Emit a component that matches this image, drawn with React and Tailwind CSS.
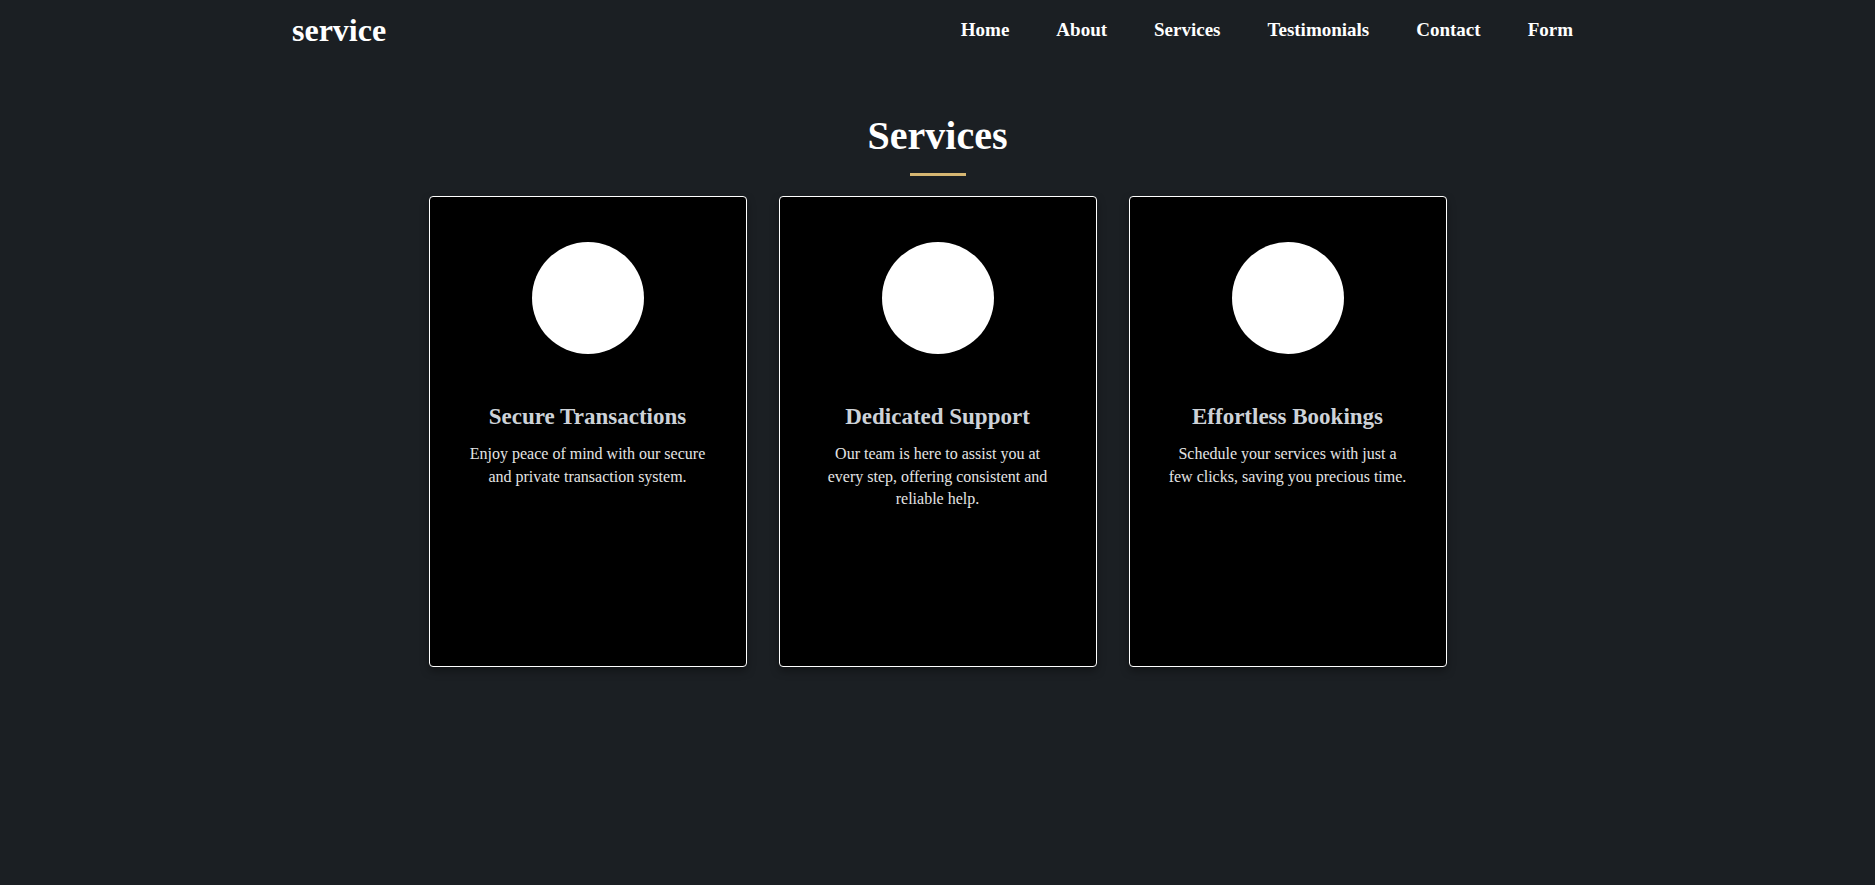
import React from "react";

const serif = { fontFamily: '"Liberation Serif", "Times New Roman", serif' };

const services = [
  {
    title: "Secure Transactions",
    text: "Enjoy peace of mind with our secure and private transaction system.",
  },
  {
    title: "Dedicated Support",
    text: "Our team is here to assist you at every step, offering consistent and reliable help.",
  },
  {
    title: "Effortless Bookings",
    text: "Schedule your services with just a few clicks, saving you precious time.",
  },
];

const links = ["Home", "About", "Services", "Testimonials", "Contact", "Form"];

export default function App() {
  return (
    <div className="min-h-screen w-full bg-[#1b1f23] text-white" style={serif}>
      <header className="mx-auto flex h-[60px] w-[1291px] items-center justify-between pr-[10px]">
        <a className="text-[32px] font-bold leading-none text-white">service</a>
        <nav className="mt-[1px]">
          <ul className="flex items-center gap-[47px]">
            {links.map((l) => (
              <li key={l}>
                <a className="text-[19px] font-bold leading-none text-white">{l}</a>
              </li>
            ))}
          </ul>
        </nav>
      </header>

      <section className="flex flex-col items-center">
        <h2 className="mt-[56px] text-[40px] font-bold leading-none text-white">Services</h2>
        <div className="mt-[17px] h-[3px] w-[56px] bg-[#d6b672]" />
        <div className="mt-[20px] flex gap-[32px]">
          {services.map((s) => (
            <div
              key={s.title}
              className="flex h-[471px] w-[318px] flex-col items-center rounded-[4px] border border-white bg-black pt-[45px] shadow-[0_4px_8px_rgba(0,0,0,0.35)]"
            >
              <div className="h-[112px] w-[112px] rounded-full bg-white" />
              <h3 className="mt-[51px] text-[23px] font-bold leading-none text-[#cdd2d8]">{s.title}</h3>
              <p className="mt-[15px] w-[242px] text-center text-[16px] leading-[22.6px] text-[#e4e4e4]">
                {s.text}
              </p>
            </div>
          ))}
        </div>
      </section>
    </div>
  );
}
